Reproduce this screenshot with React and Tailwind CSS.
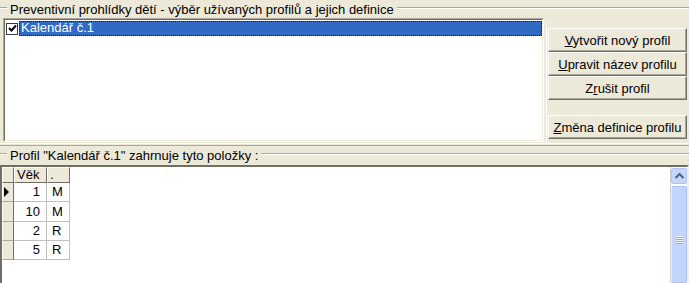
import React from 'react';

const rows = [
  { age: '1', kind: 'M', current: true },
  { age: '10', kind: 'M' },
  { age: '2', kind: 'R' },
  { age: '5', kind: 'R' },
];

const Btn = ({ children, className = '' }) => (
  <div
    className={`h-[24px] flex items-center justify-center bg-[#ECE9D8] border border-t-white border-l-white border-r-[#716F64] border-b-[#716F64] shadow-[inset_-1px_-1px_0_#ACA899] leading-[15px] ${className}`}
  >
    {children}
  </div>
);

const GroupTitle = ({ children }) => (
  <div className="flex items-start">
    <div className="w-[7px] mt-[7px] h-[2px] border-t border-t-[#ACA899] border-b border-b-white" />
    <div className="px-[3px] pt-[2px] leading-[15px] whitespace-nowrap">{children}</div>
    <div className="flex-1 mt-[7px] h-[2px] border-t border-t-[#ACA899] border-b border-b-white" />
  </div>
);

export default function App() {
  return (
    <div className="w-[689px] h-[283px] overflow-hidden bg-[#ECE9D8] text-black text-[13px] font-['Liberation_Sans',Arial,sans-serif] flex flex-col">
      <div className="h-[18px]">
        <GroupTitle>Preventivní prohlídky dětí - výběr užívaných profilů a jejich definice</GroupTitle>
      </div>

      {/* profile list + buttons */}
      <div className="h-[125px] flex">
        <div className="ml-[3px] w-[541px] h-[124px] border border-t-[#ACA899] border-l-[#ACA899] border-r-white border-b-white">
          <div className="h-full bg-white border border-t-[#716F64] border-l-[#716F64] border-r-[#F1EFE2] border-b-[#F1EFE2] pt-[1px]">
            <div className="flex items-center h-[15px]">
              <div className="ml-[1px] w-[12px] h-[12px] border border-[#3A3A3A] bg-white flex items-center justify-center">
                <svg width="9" height="9" viewBox="0 0 9 9">
                  <path d="M1 4 L3.5 6.5 L8 1.5" stroke="#000" strokeWidth="2" fill="none" />
                </svg>
              </div>
              <div className="ml-[1px] flex-1 h-[15px] bg-[#316AC5] text-white pl-[2px] leading-[14px] outline outline-1 outline-dotted outline-offset-[-1px] outline-[#1a1a1a]">
                Kalendář č.1
              </div>
            </div>
          </div>
        </div>
        <div className="ml-[2px] flex-1 mt-[4px] border-l border-l-white pl-[1px] pt-[6px]">
          <div className="w-[139px]">
            <Btn><span><span className="underline">V</span>ytvořit nový profil</span></Btn>
            <Btn><span><span className="underline">U</span>pravit název profilu</span></Btn>
            <Btn><span>Z<span className="underline">r</span>ušit profil</span></Btn>
            <Btn className="mt-[15px]"><span><span className="underline">Z</span>měna definice profilu</span></Btn>
          </div>
        </div>
      </div>

      {/* splitter */}
      <div className="h-[1px] bg-white" />
      <div className="h-[1px]" />
      <div className="h-[1px] bg-[#ACA899]" />

      <div className="h-[19px]">
        <GroupTitle>Profil "Kalendář č.1" zahrnuje tyto položky :</GroupTitle>
      </div>

      {/* items grid */}
      <div className="flex-1 border-t-2 border-t-[#716F64] border-l-2 border-l-[#716F64] border-r-2 border-r-[#F1EFE2] bg-white flex">
        <div className="flex-1 border-r border-r-[#D4D0C8]">
          <div className="flex h-[16px] leading-[14px]">
            <div className="w-[12px] bg-[#ECE9D8] border border-t-white border-l-white border-r-[#716F64] border-b-[#716F64]" />
            <div className="w-[33px] bg-[#ECE9D8] border border-t-white border-l-white border-r-[#716F64] border-b-[#716F64] pl-[2px]">Věk</div>
            <div className="w-[23px] bg-[#ECE9D8] border border-t-white border-l-white border-r-[#716F64] border-b-[#716F64] pl-[2px]">.</div>
          </div>
          {rows.map((r, i) => (
            <div key={i} className={`flex ${i === 1 ? 'h-[20px] leading-[19px]' : 'h-[19px] leading-[18px]'}`}>
              <div className="w-[12px] bg-[#ECE9D8] border-l border-l-white border-r border-r-[#716F64] border-b border-b-[#ACA899] flex items-center pl-[1px]">
                {r.current && (
                  <div className="w-0 h-0 border-y-[5px] border-y-transparent border-l-[5px] border-l-black" />
                )}
              </div>
              <div className="w-[33px] border-r border-b border-[#C0C0C0] text-right pr-[6px]">{r.age}</div>
              <div className="w-[23px] border-r border-b border-[#C0C0C0] pl-[5px]">{r.kind}</div>
            </div>
          ))}
        </div>

        {/* XP-style scrollbar */}
        <div className="w-[16px] pt-[1px] flex flex-col bg-[#FDFDFA]">
          <div className="h-[16px] rounded-[2px] border border-[#B0C6F4] bg-[#C6D7FC] flex items-center justify-center">
            <svg width="9" height="6" viewBox="0 0 9 6">
              <path d="M0.5 5 L4.5 1 L8.5 5" stroke="#4D6185" strokeWidth="2" fill="none" />
            </svg>
          </div>
          <div className="mt-[2px] flex-1 rounded-[2px] border border-[#A9C1F5] border-l-[#E4ECFE] bg-[#C3D5FC] flex flex-col items-center justify-start pt-[49px]">
            <div className="w-[7px] h-[1px] bg-[#EEF4FE]" />
            <div className="w-[7px] h-[1px] bg-[#8CABEE]" />
            <div className="w-[7px] h-[1px] bg-[#EEF4FE]" />
            <div className="w-[7px] h-[1px] bg-[#8CABEE]" />
            <div className="w-[7px] h-[1px] bg-[#EEF4FE]" />
            <div className="w-[7px] h-[1px] bg-[#8CABEE]" />
            <div className="w-[7px] h-[1px] bg-[#EEF4FE]" />
            <div className="w-[7px] h-[1px] bg-[#8CABEE]" />
          </div>
        </div>
      </div>
    </div>
  );
}
